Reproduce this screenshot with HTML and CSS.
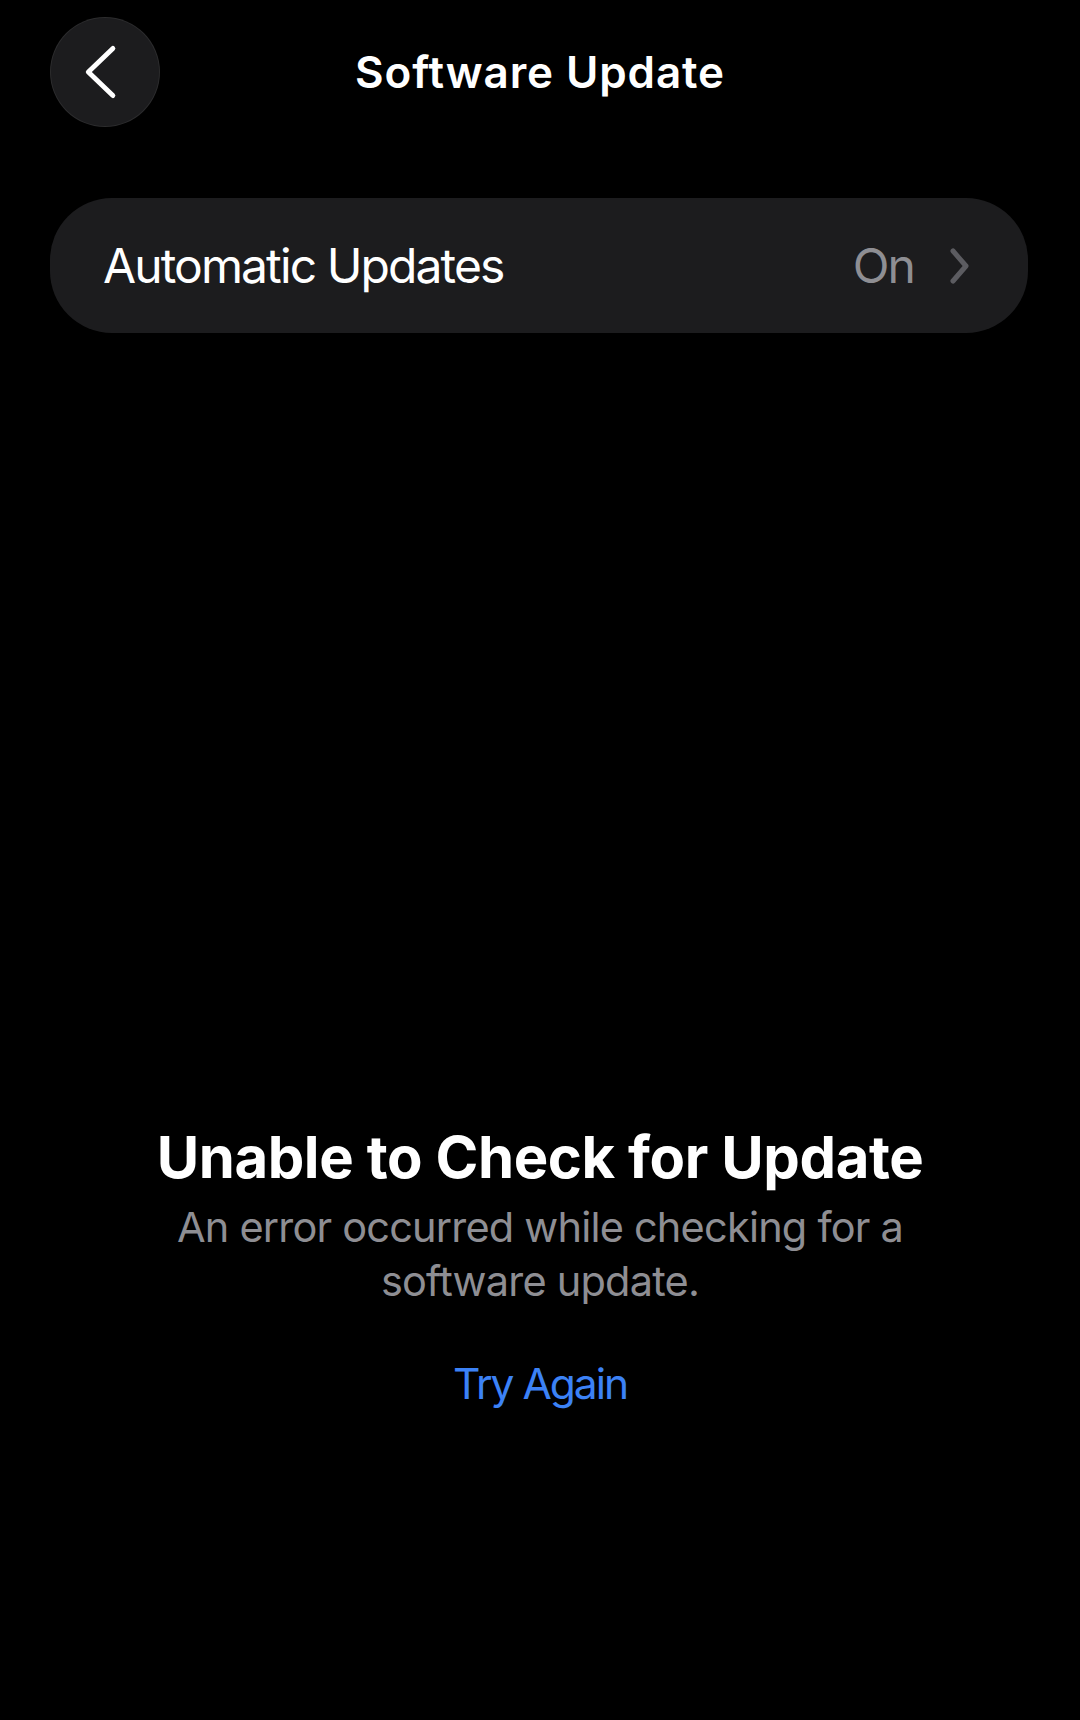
FILE: index.html
```html
<!DOCTYPE html>
<html lang="en">
<head>
  <meta charset="UTF-8">
  <meta name="viewport" content="width=device-width, initial-scale=1.0">
  <title>Software Update</title>
  <link rel="stylesheet" href="styles.css">
</head>
<body>
  <div class="screen">
    <div class="nav">
      <button class="back-button" aria-label="Back">
        <svg width="110" height="110" viewBox="0 0 110 110">
          <path d="M63 31 L38 55 L63 79" fill="none" stroke="#fff" stroke-width="5" stroke-linecap="round" stroke-linejoin="round"/>
        </svg>
      </button>
      <h1 class="nav-title">Software Update</h1>
      <div></div>
    </div>

    <div class="settings-row">
      <span class="row-label">Automatic Updates</span>
      <span class="row-value">
        On
        <svg width="20" height="36" viewBox="0 0 20 36">
          <path d="M3 3 L16 18 L3 33" fill="none" stroke="#5c5c61" stroke-width="5" stroke-linecap="round" stroke-linejoin="round"/>
        </svg>
      </span>
    </div>

    <div class="message">
      <h2 class="message-title">Unable to Check for Update</h2>
      <p class="message-text">An error occurred while checking for a software update.</p>
      <a class="try-again" href="#">Try Again</a>
    </div>
  </div>
</body>
</html>
```

FILE: styles.css
```css
body {
  margin: 0;
  background-color: #000;
  color: #fff;
  font-family: Inter, "Noto Sans", sans-serif;
}

.screen {
  width: 1080px;
  min-height: 1720px;
}

/* top bar: round back button + centered title */
.nav {
  display: grid;
  grid-template-columns: 110px 1fr 110px;
  align-items: center;
  padding: 17px 50px 0;
}

.back-button {
  width: 110px;
  height: 110px;
  padding: 0;
  border-radius: 50%;
  border: 1px solid rgba(255, 255, 255, 0.07);
  background-color: #1c1c1e;
  display: flex;
  align-items: center;
  justify-content: center;
  cursor: pointer;
}

.nav-title {
  margin: 0;
  text-align: center;
  font-size: 44px;
  font-weight: 600;
  letter-spacing: 0.9px;
}

.settings-row {
  margin: 71px 52px 0 50px;
  height: 135px;
  border-radius: 62px;
  background-color: #1c1c1e;
  display: flex;
  align-items: center;
  justify-content: space-between;
  padding: 0 58px 0 53px;
}

.row-label {
  font-size: 48px;
  letter-spacing: -1.9px;
}

.row-value {
  display: flex;
  align-items: center;
  gap: 36px;
  font-size: 48px;
  letter-spacing: -1.9px;
  color: #8e8e93;
}

/* empty state at the bottom */
.message {
  margin-top: 790px;
  text-align: center;
}

.message-title {
  margin: 0;
  font-size: 58px;
  line-height: 1.2;
  font-weight: 700;
  letter-spacing: -0.4px;
}

.message-text {
  max-width: 780px;
  margin: 7px auto 0;
  font-size: 41.5px;
  line-height: 54px;
  letter-spacing: -0.8px;
  color: #8e8e93;
}

.try-again {
  display: inline-block;
  margin-top: 49px;
  font-size: 42.5px;
  line-height: 54px;
  letter-spacing: -2px;
  color: #3c82f6;
  text-decoration: none;
}
```
